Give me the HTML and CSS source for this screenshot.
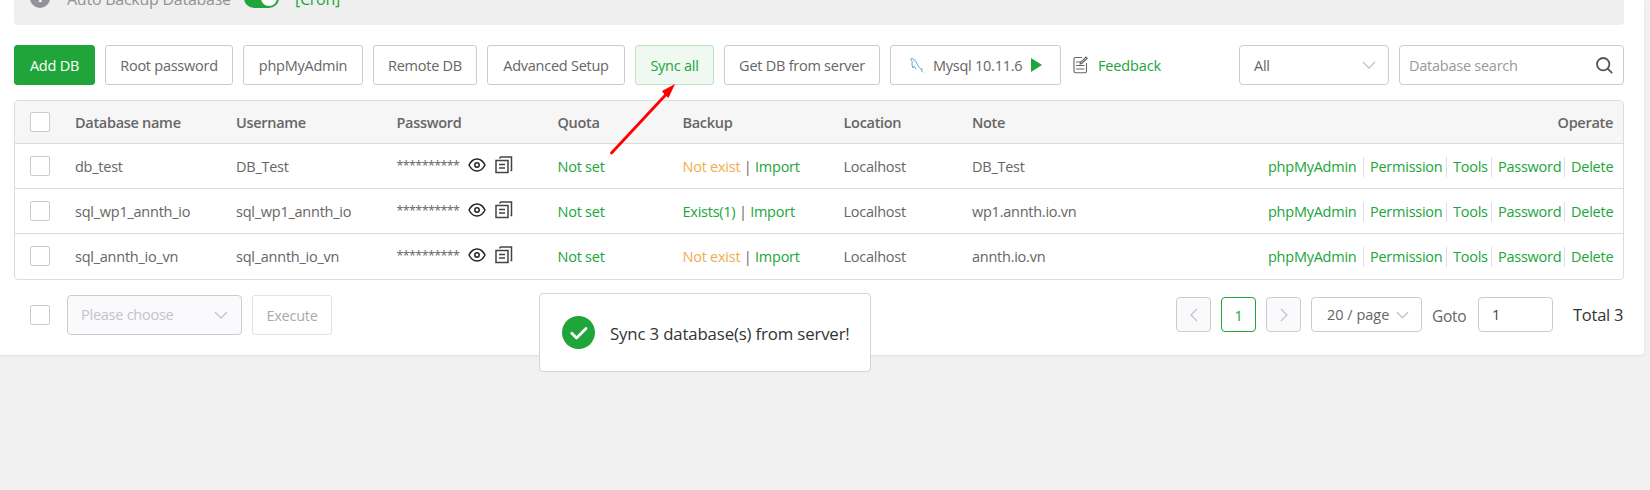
FILE: index.html
```html
<!DOCTYPE html>
<html lang="en">
<head>
<meta charset="utf-8">
<title>Databases</title>
<link rel="stylesheet" href="styles.css">
</head>
<body>
<svg width="0" height="0" class="defs">
  <symbol id="eye" viewBox="0 0 18 14"><path d="M1 7C3 3 5.700 1 9 1s6 2 8 6c-2 4-4.700 6-8 6S3 11 1 7z" fill="none" stroke="#222" stroke-width="1.500"/><circle cx="9" cy="7" r="2.200" fill="none" stroke="#222" stroke-width="1.500"/></symbol>
  <symbol id="copy" viewBox="0 0 18 18"><path d="M1 4.500h12v12H1zM5 1h11.500v13.500H15.500M5 1v1.500M4 8.500h6M4 12h6" fill="none" stroke="#444" stroke-width="1.500"/></symbol>
  <symbol id="down" viewBox="0 0 14 8"><path d="M1 1l6 6 6-6" fill="none" stroke="#c0c4cc" stroke-width="1.300"/></symbol>
</svg>
<main class="card">
  <div class="notice">
    <span class="info">i</span><span class="notice-label">Auto Backup Database</span><span class="toggle"></span><a class="cron">[Cron]</a>
  </div>
  <div class="toolbar">
    <button class="btn add">Add DB</button>
    <button class="btn root">Root password</button>
    <button class="btn php">phpMyAdmin</button>
    <button class="btn remote">Remote DB</button>
    <button class="btn advanced">Advanced Setup</button>
    <button class="btn sync">Sync all</button>
    <button class="btn get">Get DB from server</button>
    <button class="btn mysql"><svg width="14" height="15" viewBox="0 0 14 15" fill="none" stroke="#69add8" stroke-width="1"><path d="M.6.8C2.500.3 4.600 1.200 5.600 3l3.200 6 1.400 1.500 2.200.8-1.500.6 2.300 2.500M.6.800l1.600 2.700-.2 3.500 1 3 .9-1.800 2.300 3M3.600 3l.7.600"/></svg><span>Mysql 10.11.6</span><i class="play"></i></button>
    <a class="feedback"><svg width="15" height="18" viewBox="0 0 15 18" fill="none" stroke="#666" stroke-width="1.100"><path d="M9 1.500H2.500q-1.500 0-1.500 1.500v12q0 1.700 1.500 1.700h9.500q1.500 0 1.500-1.700V7M3 6h4.500M3 9.500h8.500M3 13h8.500M7.500 6.500l5.500-5.500 1.200 1.200-5.300 5.300-1.800.500z"/></svg><span>Feedback</span></a>
    <div class="select filter"><span>All</span><svg width="14" height="8"><use href="#down"/></svg></div>
    <div class="search"><span>Database search</span><svg width="17" height="17" viewBox="0 0 17 17" fill="none" stroke="#555" stroke-width="1.800"><circle cx="7.200" cy="7.200" r="6.200"/><path d="M11.600 11.600l4.600 4.600"/></svg></div>
  </div>
  <section class="table">
    <div class="row head"><span class="check"></span><span>Database name</span><span>Username</span><span>Password</span><span>Quota</span><span>Backup</span><span>Location</span><span>Note</span><span class="right">Operate</span></div>
    <div class="row"><span class="check"></span><span>db_test</span><span>DB_Test</span><span class="pass"><b>**********</b><svg width="18" height="14"><use href="#eye"/></svg><svg width="18" height="18"><use href="#copy"/></svg></span><a>Not set</a><span class="backup"><a class="warn">Not exist</a> | <a>Import</a></span><span>Localhost</span><span>DB_Test</span><span class="ops"><a>phpMyAdmin</a><a>Permission</a><a>Tools</a><a>Password</a><a>Delete</a></span></div>
    <div class="row"><span class="check"></span><span>sql_wp1_annth_io</span><span>sql_wp1_annth_io</span><span class="pass"><b>**********</b><svg width="18" height="14"><use href="#eye"/></svg><svg width="18" height="18"><use href="#copy"/></svg></span><a>Not set</a><span class="backup"><a>Exists(1)</a> | <a>Import</a></span><span>Localhost</span><span>wp1.annth.io.vn</span><span class="ops"><a>phpMyAdmin</a><a>Permission</a><a>Tools</a><a>Password</a><a>Delete</a></span></div>
    <div class="row last"><span class="check"></span><span>sql_annth_io_vn</span><span>sql_annth_io_vn</span><span class="pass"><b>**********</b><svg width="18" height="14"><use href="#eye"/></svg><svg width="18" height="18"><use href="#copy"/></svg></span><a>Not set</a><span class="backup"><a class="warn">Not exist</a> | <a>Import</a></span><span>Localhost</span><span>annth.io.vn</span><span class="ops"><a>phpMyAdmin</a><a>Permission</a><a>Tools</a><a>Password</a><a>Delete</a></span></div>
  </section>
  <div class="footer">
    <span class="check"></span>
    <div class="select choose"><span>Please choose</span><svg width="14" height="8"><use href="#down"/></svg></div>
    <button class="btn execute">Execute</button>
    <div class="pager">
      <span class="page off"><svg width="8" height="14" viewBox="0 0 8 14" fill="none" stroke="#c0c4cc" stroke-width="1.300"><path d="M7 1L1 7l6 6"/></svg></span>
      <span class="page on">1</span>
      <span class="page off"><svg width="8" height="14" viewBox="0 0 8 14" fill="none" stroke="#c0c4cc" stroke-width="1.300"><path d="M1 1l6 6-6 6"/></svg></span>
      <span class="select size"><span>20 / page</span><svg width="13" height="8"><use href="#down"/></svg></span>
      <span class="goto">Goto</span><span class="num">1</span><span class="total">Total 3</span>
    </div>
  </div>
</main>
<div class="toast"><svg width="33" height="33" viewBox="0 0 33 33"><circle cx="16.500" cy="16.500" r="16.500" fill="#20a53a"/><path d="M9.800 17.200l4.700 4.700 9.500-9.500" fill="none" stroke="#fff" stroke-width="2.800" stroke-linecap="round" stroke-linejoin="round"/></svg><span>Sync 3 database(s) from server!</span></div>
<svg class="arrow" width="68" height="74" viewBox="0 0 68 74"><path d="M3.500 71L58.500 12" stroke="#f00" stroke-width="2.800" stroke-linecap="round"/><path d="M67 2L54 9l2.500 3.500L60.500 16z" fill="#f00"/></svg>
</body>
</html>
```
FILE: styles.css
```css
* { box-sizing: border-box; }
body {
  margin: 0;
  height: 490px;
  overflow: hidden;
  background: #f1f1f1;
  color: #666;
  font: 14.5px/20px "Open Sans", "Noto Sans", sans-serif;
  letter-spacing: -0.25px;
}
.defs { position: absolute; }
a { color: #20a53a; }
.card {
  width: 1644px;
  height: 355px;
  padding: 0 20px 0 14px;
  overflow: hidden;
  background: #fff;
  border-radius: 0 0 4px 0;
  box-shadow: 0 1px 2px rgba(0, 0, 0, .08);
}
.notice {
  display: flex;
  align-items: center;
  height: 55px;
  margin-top: -30px;
  padding-left: 16px;
  background: #efefef;
  border-radius: 4px;
  color: #909399;
  font-size: 16px;
}
.info {
  width: 20px;
  height: 20px;
  border-radius: 50%;
  background: #909399;
  color: #fff;
  font: bold 14px/20px "Liberation Serif", serif;
  text-align: center;
}
.notice-label { width: 177px; margin-left: 17px; padding-top: 3px; }
.cron { padding-top: 3px; }
.toggle {
  display: flex;
  justify-content: flex-end;
  width: 35px;
  height: 20px;
  margin-right: 16px;
  padding: 2px;
  border-radius: 10px;
  background: #20a53a;
}
.toggle::after { content: ""; width: 16px; height: 16px; border-radius: 50%; background: #fff; }
.toolbar { display: flex; gap: 10px; height: 40px; margin-top: 20px; }
.btn {
  height: 40px;
  padding: 2px 0 0;
  border: 1px solid #ccc;
  border-radius: 3px;
  background: #fff;
  color: #666;
  font: inherit;
  letter-spacing: inherit;
  white-space: nowrap;
}
.add { width: 81px; border-color: #20a53a; background: #20a53a; color: #fff; }
.root { width: 128px; }
.php { width: 120px; }
.remote { width: 104px; }
.advanced { width: 138px; }
.sync { width: 79px; border-color: #bce4c4; background: #eff9f1; color: #20a53a; }
.get { width: 156px; }
.mysql { display: flex; align-items: center; width: 171px; padding: 0 0 0 19px; }
.mysql span { width: 91px; margin: 0 7px 0 9px; padding-top: 2px; text-align: left; }
.play { border: solid transparent; border-width: 7px 0 7px 11px; border-left-color: #20a53a; }
.feedback { display: flex; align-items: center; gap: 10px; margin-left: 2px; letter-spacing: -0.15px; }
.feedback span, .filter span, .search span { padding-top: 2px; }
.select, .search, .num {
  display: flex;
  align-items: center;
  justify-content: space-between;
  border: 1px solid #ccc;
  border-radius: 4px;
}
.filter { width: 150px; margin-left: auto; padding: 0 12px 0 14px; }
.search { width: 225px; padding: 0 10px 0 9px; color: #999; }
.table { margin-top: 15px; border: 1px solid #dcdcdc; border-radius: 4px; overflow: hidden; }
.row {
  display: grid;
  grid-template-columns: 45px 161px 160.5px 161px 125px 161px 128.5px 200px 1fr;
  align-items: center;
  height: 45px;
  padding: 0 10px 0 15px;
  border-bottom: 1px solid #dcdcdc;
  white-space: nowrap;
}
.row > :not(.check):not(.pass) { padding-top: 2px; }
.head { height: 43px; background: #f6f6f6; font-weight: 600; letter-spacing: -0.3px; }
.row.last { padding-bottom: 1px; border: 0; }
.right { text-align: right; }
.check { width: 20px; height: 20px; border: 1px solid #ccc; border-radius: 2px; background: #fff; }
.pass { display: flex; align-items: center; padding-bottom: 2px; }
.pass b { width: 63px; padding-top: 2px; font-weight: 400; font-size: 12.5px; letter-spacing: -0.6px; }
.pass svg { margin-left: 8px; }
.pass svg:last-child { margin-left: 9px; }
.warn { color: #f0ad4e; }
.ops { display: grid; grid-template-columns: 96px 83px 45px 73px 48px; justify-content: flex-end; }
.ops a { padding-left: 6px; }
.ops a:first-child { padding-left: 0; }
.ops a:not(:last-child) { border-right: 1px solid #dcdfe6; }
.footer { display: flex; align-items: center; height: 40px; margin-top: 15px; padding-left: 16px; }
.choose { width: 175px; height: 40px; margin: 0 10px 0 17px; padding: 0 13px 0 13px; background: #fafafc; color: #c0c4cc; }
.execute { width: 80px; border-color: #e2e2e2; color: #aaa; }
.pager { display: flex; align-items: center; gap: 10px; height: 35px; margin: 0 0 1px auto; }
.page { display: flex; align-items: center; justify-content: center; width: 35px; height: 35px; border: 1px solid #ccc; border-radius: 4px; }
.off { background: #fafafc; }
.on { padding-top: 2px; border-color: #20a53a; color: #20a53a; }
.size { width: 111px; height: 35px; padding: 0 12px 0 15px; letter-spacing: 0; }
.goto { width: 36px; padding-top: 2px; font-size: 15.5px; }
.num { width: 75px; height: 35px; padding-left: 13px; color: #444; }
.total { width: 51px; margin-left: 10px; padding-top: 1px; color: #333; font-size: 16.5px; white-space: nowrap; }
.toast {
  position: absolute;
  left: 539px;
  top: 293px;
  display: flex;
  align-items: center;
  gap: 15px;
  width: 332px;
  height: 79px;
  padding-left: 22px;
  border: 1px solid #d3d4d3;
  border-radius: 4px;
  background: #fff;
  color: #333;
  font-size: 16.8px;
  letter-spacing: -0.15px;
  white-space: nowrap;
}
.toast span { padding-top: 2px; }
.arrow { position: absolute; left: 608px; top: 82px; }
```
